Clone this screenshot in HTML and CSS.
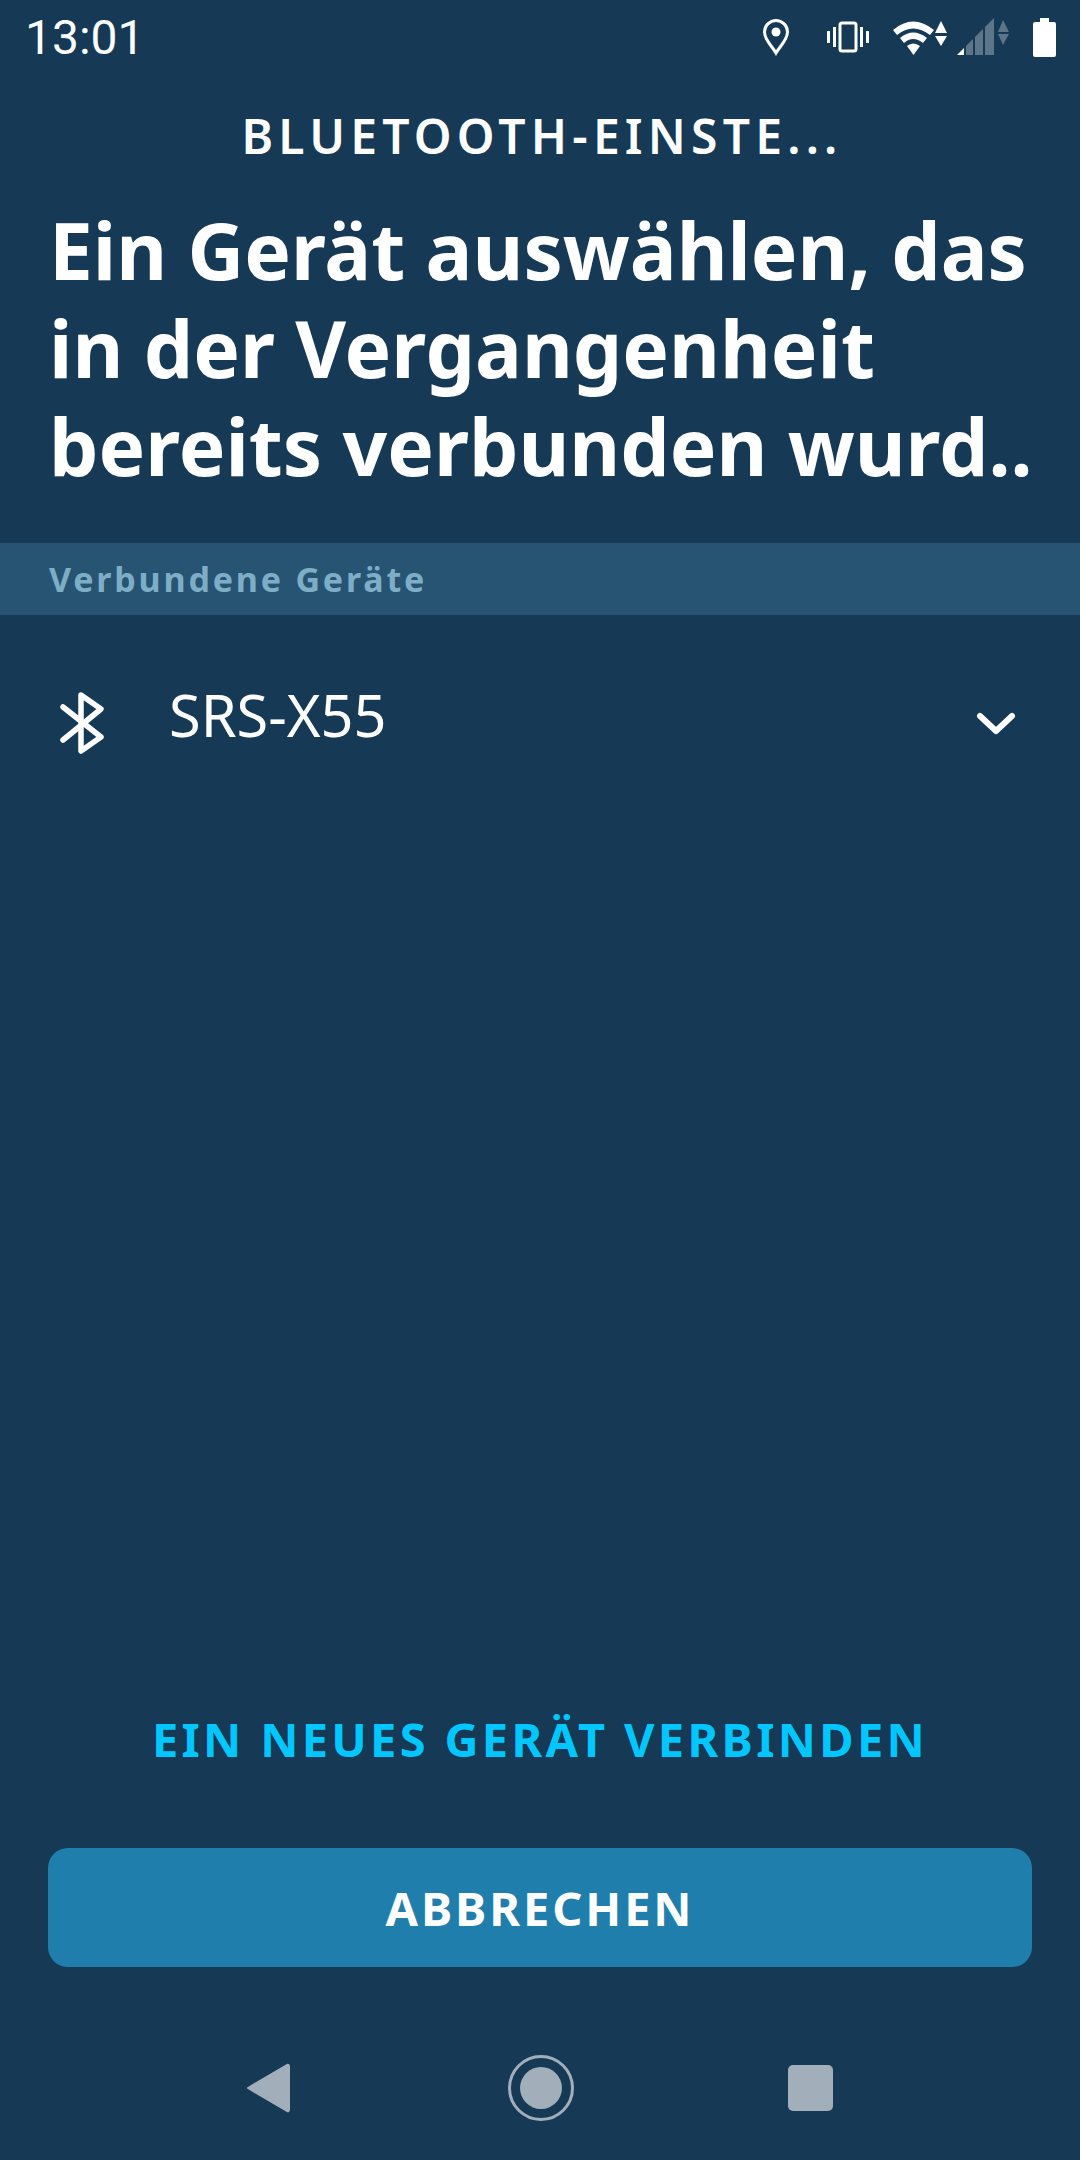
FILE: index.html
```html
<!DOCTYPE html>
<html lang="de">
<head>
  <meta charset="UTF-8">
  <meta name="viewport" content="width=device-width, initial-scale=1.0">
  <title>Bluetooth-Einstellungen</title>
  <link rel="stylesheet" href="styles.css">
</head>
<body>

<div class="screen">
  <div class="status-bar">
    <span class="clock">13:01</span>
    <div class="status-icons">
      <!-- location -->
      <svg class="icon-location" width="28" height="38" viewBox="0 0 28 38">
        <path d="M14 35 C10 28 2.5 22 2.5 14 A11.5 11.5 0 0 1 25.5 14 C25.5 22 18 28 14 35 Z" fill="none" stroke="#fff" stroke-width="3"/>
        <circle cx="14" cy="14" r="4.5" fill="#fff"/>
      </svg>
      <!-- vibrate -->
      <svg class="icon-vibrate" width="42" height="32" viewBox="0 0 42 32">
        <rect x="13" y="2" width="16" height="28" rx="2" fill="none" stroke="#fff" stroke-width="3"/>
        <rect x="0" y="10" width="3" height="12" fill="#fff"/>
        <rect x="6" y="6" width="3" height="20" fill="#fff"/>
        <rect x="33" y="6" width="3" height="20" fill="#fff"/>
        <rect x="39" y="10" width="3" height="12" fill="#fff"/>
      </svg>
      <!-- wifi -->
      <svg class="icon-wifi" width="54" height="37" viewBox="0 0 54 37">
        <path d="M0 11 Q20 -6 41 11 L37 16 Q20 3 4 16 Z" fill="#fff"/>
        <path d="M7 19 Q20 8 34 19 L30 24 Q20 16 11 24 Z" fill="#fff"/>
        <path d="M14 27 Q20 22 27 27 L20.5 36 Z" fill="#fff"/>
        <path d="M48 2 L54 14 L42 14 Z" fill="#fff"/>
        <path d="M42 17 L54 17 L48 27 Z" fill="#fff"/>
      </svg>
      <!-- signal -->
      <svg class="icon-signal" width="52" height="38" viewBox="0 0 52 38">
        <path d="M0 37 L7 30 L7 37 Z" fill="#fff"/>
        <path d="M9 28 L16 21 L16 37 L9 37 Z" fill="#5d7589"/>
        <path d="M18 19 L26 11 L26 37 L18 37 Z" fill="#5d7589"/>
        <path d="M28 9 L37 0 L37 37 L28 37 Z" fill="#5d7589"/>
        <path d="M46 2 L52 14 L41 14 Z" fill="#5d7589"/>
        <path d="M41 16 L52 16 L46 27 Z" fill="#5d7589"/>
      </svg>
      <!-- battery -->
      <svg class="icon-battery" width="23" height="39" viewBox="0 0 23 39">
        <path d="M7 0 H16 V4 H21 Q23 4 23 6 V37 Q23 39 21 39 H2 Q0 39 0 37 V6 Q0 4 2 4 H7 Z" fill="#fff"/>
      </svg>
    </div>
  </div>

  <div class="page-title">BLUETOOTH-EINSTE...</div>

  <h1 class="heading">Ein Gerät auswählen, das<br>in der Vergangenheit<br>bereits verbunden wurd..</h1>

  <div class="section-bar">Verbundene Geräte</div>

  <div class="device-row">
    <svg class="icon-bluetooth" width="48" height="62" viewBox="0 0 48 62">
      <path d="M4 15 L42 45 L22 59 L22 3 L42 17 L4 48" fill="none" stroke="#fff" stroke-width="5.5" stroke-linejoin="round" stroke-linecap="round"/>
    </svg>
    <span class="device-name">SRS-X55</span>
    <svg class="icon-chevron" width="40" height="26" viewBox="0 0 40 26">
      <path d="M4 5 L20 20 L36 5" fill="none" stroke="#fff" stroke-width="6" stroke-linecap="round" stroke-linejoin="round"/>
    </svg>
  </div>

  <div class="spacer"></div>

  <div class="link-row">EIN NEUES GERÄT VERBINDEN</div>

  <button type="button" class="cancel-btn">ABBRECHEN</button>

  <div class="nav-bar">
    <svg width="46" height="50" viewBox="0 0 46 50">
      <path d="M3 25 L42 2 Q44 1 44 4 V46 Q44 49 42 48 Z" fill="#a2afbb" stroke="#a2afbb" stroke-width="2" stroke-linejoin="round"/>
    </svg>
    <svg width="66" height="66" viewBox="0 0 66 66">
      <circle cx="33" cy="33" r="31.5" fill="none" stroke="#a2afbb" stroke-width="3"/>
      <circle cx="33" cy="33" r="21" fill="#a2afbb"/>
    </svg>
    <div class="nav-square"></div>
  </div>
</div>

</body>
</html>
```

FILE: styles.css
```css
body {
  font-family: "Noto Sans", Arial, sans-serif;
  margin: 0;
  padding: 0;
  background-color: #163955;
  color: #ffffff;
}

.screen {
  width: 1080px;
  height: 2160px;
  display: flex;
  flex-direction: column;
  overflow: hidden;
}

.status-bar {
  height: 74px;
  display: flex;
  align-items: center;
  justify-content: space-between;
  padding: 0 24px 0 25px;
}

.clock {
  font-family: Roboto, sans-serif;
  font-size: 48px;
}

.status-icons {
  display: flex;
  align-items: center;
  gap: 24px;
}

.icon-location {
  margin-right: 13px;
}

.icon-signal {
  margin-left: -14px;
}

.page-title {
  height: 70px;
  margin-top: 27px;
  padding-left: 4px;
  line-height: 70px;
  text-align: center;
  font-size: 48px;
  font-weight: 600;
  letter-spacing: 5.2px;
}

.heading {
  margin: 30px 0 0;
  padding: 0 49px;
  font-size: 78.3px;
  line-height: 98px;
  font-weight: 700;
  white-space: nowrap;
}

.section-bar {
  height: 72px;
  margin-top: 48px;
  padding-left: 49px;
  line-height: 72px;
  background-color: #285474;
  color: #7eaec6;
  font-size: 34px;
  font-weight: 700;
  letter-spacing: 2.8px;
}

.device-row {
  height: 206px;
  display: flex;
  align-items: center;
  padding: 0 64px 0 59px;
}

.device-name {
  flex: 1;
  margin-left: 62px;
  margin-bottom: 8px;
  font-size: 57.7px;
}

.icon-bluetooth {
  margin-top: 10px;
}

.icon-chevron {
  margin-top: 12px;
}

.spacer {
  flex: 1;
}

.link-row {
  text-align: center;
  color: #00c7ff;
  font-size: 47px;
  font-weight: 700;
  letter-spacing: 3.3px;
  margin-bottom: 77px;
}

.cancel-btn {
  display: block;
  margin: 0 48px;
  width: 984px;
  height: 119px;
  border: none;
  border-radius: 20px;
  background-color: #1f7eab;
  color: #ffffff;
  font-family: "Noto Sans", Arial, sans-serif;
  font-size: 47px;
  font-weight: 700;
  letter-spacing: 2.9px;
}

.nav-bar {
  height: 193px;
  box-sizing: border-box;
  padding: 49px 3px 0 0;
  display: flex;
  align-items: center;
  justify-content: center;
  gap: 217px;
}

.nav-square {
  width: 45px;
  height: 46px;
  margin-left: -3px;
  border-radius: 5px;
  background-color: #a2afbb;
}
```
